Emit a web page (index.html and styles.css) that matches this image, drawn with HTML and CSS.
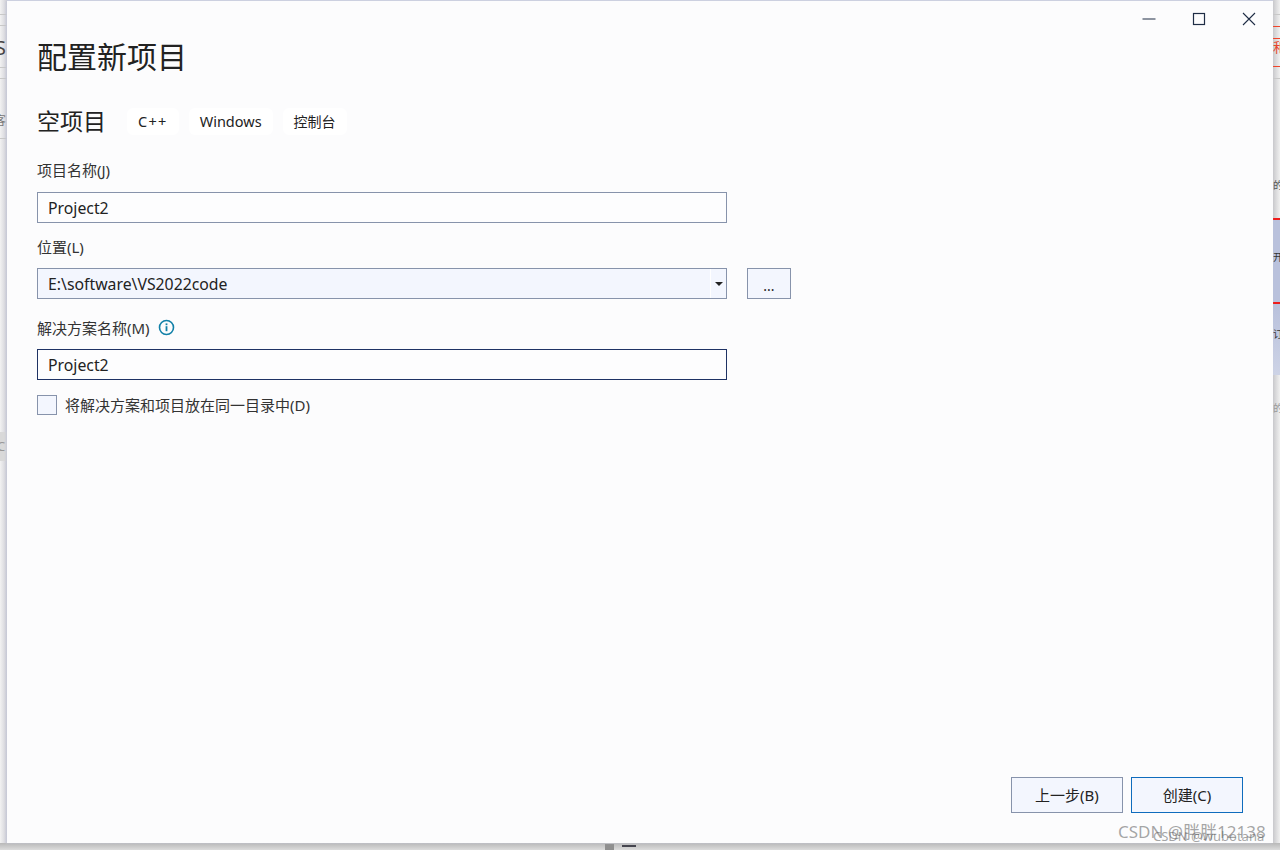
FILE: index.html
```html
<!DOCTYPE html>
<html lang="zh-CN">
<head>
  <meta charset="UTF-8">
  <title>配置新项目</title>
  <link rel="stylesheet" href="styles.css">
</head>
<body>

<!-- 背后窗口露出的部分 -->
<div class="back-left">
  <div class="line line-a"></div>
  <div class="line line-b"></div>
  <span class="scrap scrap-s">S</span>
  <div class="line line-c"></div>
  <div class="line line-d"></div>
  <span class="scrap scrap-k">客</span>
  <div class="line line-e"></div>
  <div class="chip"></div>
  <span class="scrap scrap-c">C</span>
</div>
<div class="back-right">
  <div class="line line-f"></div>
  <div class="red red-a"></div>
  <div class="red red-b"></div>
  <span class="scrap scrap-r">和</span>
  <div class="red red-c"></div>
  <div class="line line-g"></div>
  <div class="band"></div>
  <span class="scrap scrap-1">的</span>
  <div class="red red-d"></div>
  <span class="scrap scrap-2">开</span>
  <div class="red red-e"></div>
  <span class="scrap scrap-3">订</span>
  <span class="scrap scrap-4">的</span>
</div>
<div class="back-bottom">
  <div class="thumb"></div>
  <div class="hourglass"></div>
</div>

<main class="dialog">
  <div class="window-btns">
    <svg width="16" height="16" viewBox="0 0 16 16"><path d="M1.5 8h13" stroke="#1f2d45" stroke-width="1"/></svg>
    <svg width="16" height="16" viewBox="0 0 16 16"><rect x="2.5" y="2.5" width="11" height="11" fill="none" stroke="#1f2d45" stroke-width="1.2"/></svg>
    <svg width="16" height="16" viewBox="0 0 16 16"><path d="M2 2l12 12M14 2L2 14" stroke="#1f2d45" stroke-width="1.1"/></svg>
  </div>

  <h1>配置新项目</h1>

  <div class="template">
    <h2>空项目</h2>
    <span class="tag tag-cpp">C++</span>
    <span class="tag">Windows</span>
    <span class="tag tag-cn">控制台</span>
  </div>

  <label class="label label-name">项目名称(J)</label>
  <div class="field">Project2</div>

  <label class="label label-place">位置(L)</label>
  <div class="row">
    <div class="field combo">
      <span class="combo-text">E:\software\VS2022code</span>
      <span class="combo-arrow"><i></i></span>
    </div>
    <div class="browse">...</div>
  </div>

  <label class="label label-solution">解决方案名称(M)
    <svg class="info" width="17" height="17" viewBox="0 0 17 17">
      <circle cx="8.5" cy="8.5" r="7" fill="none" stroke="#1180a8" stroke-width="1.6"/>
      <rect x="7.6" y="7.2" width="1.8" height="5" fill="#1180a8"/>
      <rect x="7.6" y="4.4" width="1.8" height="1.8" fill="#1180a8"/>
    </svg>
  </label>
  <div class="field focused">Project2</div>

  <div class="check-row">
    <span class="check"></span>
    <span class="check-text">将解决方案和项目放在同一目录中(D)</span>
  </div>

  <div class="actions">
    <div class="btn">上一步(B)</div>
    <div class="btn primary">创建(C)</div>
  </div>
</main>

<div class="mark mark-a">CSDN @胖胖12138</div>
<div class="mark mark-b">CSDN @wubotana</div>

</body>
</html>
```

FILE: styles.css
```css
* {
  box-sizing: border-box;
}

html, body {
  margin: 0;
  height: 100%;
}

body {
  position: relative;
  width: 1280px;
  height: 850px;
  overflow: hidden;
  background: #d8d8da;
  font-family: "Noto Sans", "Noto Sans CJK SC", sans-serif;
  color: #1e1e1e;
}

/* 背后的窗口 */
.back-left,
.back-right,
.back-bottom {
  position: absolute;
  background: #f1f1f1;
}

.back-left {
  left: 0;
  top: 0;
  width: 7px;
  height: 850px;
  background: linear-gradient(to right, #f2f2f2, #cfcfd6);
}

.back-right {
  right: 0;
  top: 0;
  width: 7px;
  height: 850px;
  background: linear-gradient(to right, #c9c9cc, #f0f0f0);
}

.back-bottom {
  left: 0;
  top: 843px;
  width: 1280px;
  height: 7px;
  background: linear-gradient(to bottom, #b8b8b8, #dcdcdc);
}

.line,
.red {
  position: absolute;
  left: 0;
  width: 7px;
  height: 1px;
  background: #c8c8c8;
}

.red {
  background: #f0442a;
}

.line-a { top: 14px; }
.line-b { top: 25px; }
.line-c { top: 67px; }
.line-d { top: 78px; }
.line-e { top: 138px; }
.line-f { top: 14px; }
.line-g { top: 78px; }
.red-a { top: 26px; }
.red-b { top: 38px; }
.red-c { top: 66px; }
.red-d { top: 218px; height: 2px; background: #ee1c1c; }
.red-e { top: 302px; height: 2px; background: #ee1c1c; }

.chip {
  position: absolute;
  left: 0;
  top: 432px;
  width: 7px;
  height: 29px;
  background: #d9d9d9;
}

.band {
  position: absolute;
  left: 0;
  top: 220px;
  width: 7px;
  height: 155px;
  background: linear-gradient(to bottom, #b9c1dc 0, #b9c1dc 55%, #cdd3e6 100%);
}

.scrap {
  position: absolute;
  overflow: hidden;
  display: block;
  font-size: 10px;
  line-height: 14px;
  color: #555;
}

.scrap-s { left: -5px; top: 36px; width: 12px; font-size: 20px; line-height: 24px; color: #444; }
.scrap-k { left: -6px; top: 114px; width: 13px; font-size: 12px; color: #777; }
.scrap-c { left: -3px; top: 439px; width: 10px; font-size: 13px; color: #999; }
.scrap-r { left: 0; top: 40px; width: 7px; font-size: 13px; color: #e8452e; }
.scrap-1 { left: 0; top: 178px; width: 7px; }
.scrap-2 { left: 0; top: 250px; width: 7px; color: #333; }
.scrap-3 { left: 0; top: 327px; width: 7px; color: #333; }
.scrap-4 { left: 0; top: 401px; width: 7px; color: #999; }

.thumb {
  position: absolute;
  left: 605px;
  top: 1px;
  width: 9px;
  height: 6px;
  background: #8f8f8f;
}

.hourglass {
  position: absolute;
  left: 622px;
  top: 2px;
  width: 14px;
  height: 5px;
  border-top: 2px solid #45454f;
}

/* 对话框 */
.dialog {
  position: absolute;
  left: 7px;
  top: 1px;
  width: 1266px;
  height: 842px;
  padding: 36px 30px 0;
  background: #fcfcfd;
  box-shadow: 0 -1px 0 #ccd0e0, -1px 0 2px #c5c7d6;
}

.window-btns {
  position: absolute;
  top: 10px;
  right: 16px;
  display: flex;
  gap: 34px;
}

h1 {
  margin: 0;
  font-size: 30px;
  line-height: 40px;
  font-weight: 400;
  color: #222;
}

.template {
  display: flex;
  align-items: center;
  gap: 10px;
  margin-top: 30px;
  height: 28px;
}

h2 {
  margin: 0 11px 0 0;
  font-size: 23px;
  line-height: 28px;
  font-weight: 400;
  color: #222;
}

.tag {
  display: flex;
  align-items: center;
  height: 27px;
  padding: 0 11px;
  border-radius: 6px;
  background: #fff;
  font-size: 14.5px;
  color: #222;
}

.tag-cpp {
  letter-spacing: 1.3px;
}

.tag-cn {
  font-size: 14px;
}

.label {
  display: flex;
  align-items: center;
  gap: 8px;
  height: 20px;
  font-size: 15px;
  color: #333;
}

.label-name { margin-top: 24px; }
.label-place { margin-top: 13px; }
.label-solution { margin-top: 18px; }

.field {
  display: flex;
  align-items: center;
  width: 690px;
  height: 31px;
  margin-top: 13px;
  padding: 0 10px;
  border: 1px solid #8793ab;
  background: #fdfdfe;
  font-size: 15.8px;
  color: #222;
}

.row {
  display: flex;
  gap: 20px;
  margin-top: 12px;
}

.combo {
  margin-top: 0;
  padding: 0 0 0 10px;
  justify-content: space-between;
  background: #f3f6fe;
}

.combo-arrow {
  display: flex;
  align-items: center;
  justify-content: center;
  width: 16px;
  height: 100%;
  border-left: 1px solid #fff;
}

.combo-arrow i {
  border-left: 4px solid transparent;
  border-right: 4px solid transparent;
  border-top: 4px solid #222;
}

.browse {
  display: flex;
  align-items: center;
  justify-content: center;
  width: 44px;
  height: 31px;
  padding-top: 3px;
  border: 1px solid #8793ab;
  background: #f3f6fe;
  font-size: 14px;
  color: #222;
}

.focused {
  margin-top: 12px;
  border-color: #1e3264;
}

.check-row {
  display: flex;
  align-items: center;
  gap: 8px;
  margin-top: 14px;
}

.check {
  width: 20px;
  height: 20px;
  border: 1px solid #8793ab;
  background: #f3f6fe;
}

.check-text {
  font-size: 15px;
  color: #333;
}

.actions {
  position: absolute;
  right: 30px;
  bottom: 30px;
  display: flex;
  gap: 8px;
}

.btn {
  display: flex;
  align-items: center;
  justify-content: center;
  width: 112px;
  height: 36px;
  padding-bottom: 2px;
  border: 1px solid #8793ab;
  background: #f3f6fe;
  font-size: 15px;
  color: #222;
}

.primary {
  border-color: #0f6cbd;
}

/* 水印 */
.mark {
  position: absolute;
  line-height: 18px;
  white-space: nowrap;
  color: rgba(90, 90, 90, 0.55);
}

.mark-a {
  left: 1118px;
  top: 823px;
  font-size: 17px;
}

.mark-b {
  left: 1153px;
  top: 827px;
  font-size: 13px;
}
```
